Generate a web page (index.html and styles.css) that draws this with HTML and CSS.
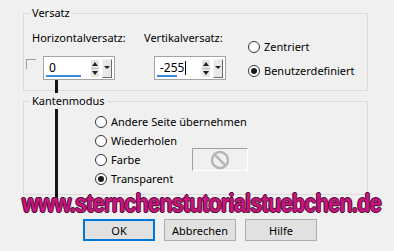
FILE: index.html
```html
<!DOCTYPE html>
<html lang="de">
<head>
    <meta charset="UTF-8">
    <title>Versatz</title>
    <link rel="stylesheet" href="styles.css">
</head>
<body>
    <div class="dialog">
        <!-- Versatz -->
        <fieldset class="group">
            <legend>Versatz</legend>
            <div class="offset-body">
                <div class="col col-h">
                    <div class="label">Horizontalversatz:</div>
                    <div class="spin-row">
                        <span class="check"></span>
                        <div class="spin">
                            <span class="value">0</span>
                            <span class="underline u-h"></span>
                            <span class="arrows">
                                <svg width="8" height="17" viewBox="0 0 8 17"><path d="M4 2 L7 6 L1 6 Z M1 11 L7 11 L4 15 Z" fill="#222"/><line x1="0" y1="8.5" x2="8" y2="8.5" stroke="#bdbdbd"/></svg>
                            </span>
                            <span class="drop">
                                <svg width="6" height="4" viewBox="0 0 6 4"><path d="M0 0 L6 0 L3 3 Z" fill="#222"/></svg>
                            </span>
                        </div>
                    </div>
                </div>
                <div class="col col-v">
                    <div class="label">Vertikalversatz:</div>
                    <div class="spin-row">
                        <div class="spin">
                            <span class="value">-255<span class="caret"></span></span>
                            <span class="underline u-v"></span>
                            <span class="arrows">
                                <svg width="8" height="17" viewBox="0 0 8 17"><path d="M4 2 L7 6 L1 6 Z M1 11 L7 11 L4 15 Z" fill="#222"/><line x1="0" y1="8.5" x2="8" y2="8.5" stroke="#bdbdbd"/></svg>
                            </span>
                            <span class="drop">
                                <svg width="6" height="4" viewBox="0 0 6 4"><path d="M0 0 L6 0 L3 3 Z" fill="#222"/></svg>
                            </span>
                        </div>
                    </div>
                </div>
                <div class="col col-r">
                    <div class="radio"><span class="dot"></span>Zentriert</div>
                    <div class="radio"><span class="dot on"></span>Benutzerdefiniert</div>
                </div>
            </div>
        </fieldset>

        <!-- Kantenmodus -->
        <fieldset class="group group-edge">
            <legend>Kantenmodus</legend>
            <div class="edge-body">
                <div class="radio"><span class="dot"></span>Andere Seite übernehmen</div>
                <div class="radio"><span class="dot"></span>Wiederholen</div>
                <div class="radio">
                    <span class="radio-label"><span class="dot"></span>Farbe</span>
                    <span class="swatch">
                        <svg width="20" height="20" viewBox="0 0 20 20"><circle cx="10" cy="10" r="8" fill="none" stroke="#b5b5b5" stroke-width="2.4"/><line x1="4.6" y1="4.6" x2="15.4" y2="15.4" stroke="#b5b5b5" stroke-width="2.4"/></svg>
                    </span>
                </div>
                <div class="radio"><span class="dot on"></span>Transparent</div>
            </div>
        </fieldset>

        <div class="buttons">
            <button class="btn default">OK</button>
            <button class="btn">Abbrechen</button>
            <button class="btn">Hilfe</button>
        </div>

        <!-- overlays -->
        <div class="marker"></div>
        <div class="watermark">www.sternchenstutorialstuebchen.de</div>
    </div>
</body>
</html>
```
FILE: styles.css
```css
body {
    margin: 0;
    background-color: #f0f0f0;
    font-family: "Noto Sans", "Open Sans", sans-serif;
    font-size: 11px;
    color: #000;
}
.dialog {
    position: relative;
    width: 394px;
    height: 251px;
    padding: 5px 0 0 23px;
    box-sizing: border-box;
}
/* Group boxes */
.group {
    margin: 0;
    padding: 0;
    width: 345px;
    box-sizing: border-box;
    border: 1px solid #dcdcdc;
    min-width: 0;
}
.group legend {
    position: relative;
    z-index: 2;
    margin-left: 6px;
    padding: 0 2px;
    line-height: 16px;
    background-color: #f0f0f0;
}
.offset-body {
    display: flex;
    padding: 9px 0 10px 8px;
}
.group-edge {
    margin-top: 2px;
}
.edge-body {
    padding: 5px 0 7px 71px;
    display: flex;
    flex-direction: column;
    gap: 3px;
}
.col {
    display: flex;
    flex-direction: column;
}
.col-h {
    width: 112px;
}
.col-v {
    width: 104px;
}
.label {
    line-height: 16px;
}
.spin-row {
    display: flex;
    align-items: flex-start;
    margin-top: 10px;
    margin-left: 10px;
}
.check {
    width: 9px;
    height: 9px;
    margin: 3px 7px 0 -16px;
    border-top: 1px solid #a0a0a0;
    border-left: 1px solid #a0a0a0;
}
.spin {
    position: relative;
    width: 72px;
    height: 24px;
    box-sizing: border-box;
    border: 1px solid #a3a3a3;
    background-color: #fff;
    display: flex;
    align-items: center;
}
.value {
    flex: 1;
    padding-left: 5px;
    font-size: 12px;
    line-height: 16px;
    display: flex;
    align-items: center;
}
.caret {
    display: inline-block;
    width: 1px;
    height: 14px;
    margin-left: 1px;
    background-color: #000;
}
.underline {
    position: absolute;
    left: 2px;
    bottom: 2px;
    height: 2px;
    background-color: #3c8de0;
}
.u-h {
    width: 35px;
}
.u-v {
    width: 20px;
}
.arrows {
    width: 8px;
    height: 17px;
    margin-right: 3px;
    background-color: #e5e5e5;
    display: flex;
}
.drop {
    width: 8px;
    height: 17px;
    margin-right: 2px;
    border: 1px solid #f5f5f5;
    border-right-color: #6b6b6b;
    border-bottom-color: #6b6b6b;
    background-color: #e8e8e8;
    display: flex;
    align-items: center;
    justify-content: center;
}
.col-r {
    gap: 8px;
    padding-top: 9px;
}
/* Radios */
.radio {
    display: flex;
    align-items: center;
    line-height: 16px;
}
.dot {
    width: 12px;
    height: 12px;
    box-sizing: border-box;
    border: 1px solid #333;
    border-radius: 50%;
    background-color: #fff;
    margin-right: 4px;
    position: relative;
}
.dot.on::after {
    content: "";
    position: absolute;
    left: 2px;
    top: 2px;
    width: 6px;
    height: 6px;
    border-radius: 50%;
    background-color: #1a1a1a;
}
.radio-label {
    display: flex;
    align-items: center;
    width: 97px;
}
.swatch {
    width: 56px;
    height: 23px;
    margin: -4px 0 -3px;
    box-sizing: border-box;
    border: 1px solid #fff;
    border-top-color: #a0a0a0;
    border-left-color: #a0a0a0;
    display: flex;
    align-items: center;
    justify-content: center;
}
/* Buttons */
.buttons {
    display: flex;
    gap: 9px;
    margin: 24px 0 0 60px;
}
.btn {
    width: 72px;
    height: 22px;
    padding: 0;
    font-family: inherit;
    font-size: 11px;
    background-color: #e1e1e1;
    border: 1px solid #adadad;
}
.btn.default {
    border: 2px solid #0078d7;
}
/* Overlays */
.marker {
    position: absolute;
    left: 55px;
    top: 80px;
    width: 3px;
    height: 125px;
    background-color: #151515;
}
.watermark {
    position: absolute;
    left: 22px;
    top: 189px;
    font-family: "Liberation Sans", Arial, sans-serif;
    font-weight: bold;
    font-size: 25px;
    letter-spacing: -1px;
    line-height: 28px;
    white-space: nowrap;
    transform: scaleX(0.876);
    transform-origin: left top;
    color: #c8147e;
    text-shadow: 1px 0 #4a0c30, -1px 0 #4a0c30, 0 1px #4a0c30, 0 -1px #4a0c30;
    z-index: 3;
}
```
